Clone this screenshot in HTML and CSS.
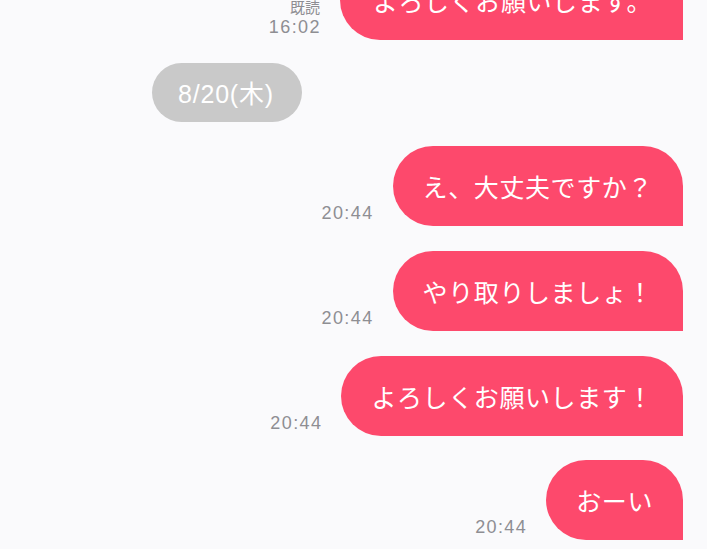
FILE: index.html
```html
<!DOCTYPE html>
<html lang="ja">
<head>
    <meta charset="UTF-8">
    <meta name="viewport" content="width=device-width, initial-scale=1.0">
    <title>トーク</title>
    <link rel="stylesheet" href="styles.css">
</head>
<body>
    <div class="chat">
        <div class="msg-row first">
            <div class="meta">
                <span class="read">既読</span>
                <span class="time">16:02</span>
            </div>
            <div class="bubble">よろしくお願いします。</div>
        </div>

        <div class="date-row">
            <span class="date-pill">8/20(木)</span>
        </div>

        <div class="msg-row">
            <div class="meta"><span class="time">20:44</span></div>
            <div class="bubble">え、大丈夫ですか？</div>
        </div>

        <div class="msg-row">
            <div class="meta"><span class="time">20:44</span></div>
            <div class="bubble">やり取りしましょ！</div>
        </div>

        <div class="msg-row">
            <div class="meta"><span class="time">20:44</span></div>
            <div class="bubble">よろしくお願いします！</div>
        </div>

        <div class="msg-row">
            <div class="meta"><span class="time">20:44</span></div>
            <div class="bubble">おーい</div>
        </div>
    </div>
</body>
</html>
```

FILE: styles.css
```css
:root {
    --bubble-color: #fd496c;
    --meta-color: #8e8e93;
}

body {
    margin: 0;
    padding: 0;
    background-color: #fafafc;
    font-family: "Noto Sans CJK JP", "Liberation Sans", sans-serif;
    overflow: hidden;
}

.chat {
    display: flex;
    flex-direction: column;
    gap: 24.7px;
    padding-right: 24px;
}

.msg-row {
    display: flex;
    justify-content: flex-end;
    align-items: flex-end;
    gap: 19px;
}

.msg-row.first {
    margin-top: -40px;
}

.msg-row.first .bubble {
    padding: 0 31px 0 33px;
}

.meta {
    display: flex;
    flex-direction: column;
    align-items: flex-end;
    padding-bottom: 2px;
    color: var(--meta-color);
}

.read {
    font-size: 15px;
    line-height: 16px;
    margin-bottom: 2px;
    margin-right: 1px;
}

.time {
    font-family: "Liberation Sans", sans-serif;
    font-size: 18px;
    line-height: 21px;
    letter-spacing: 1.4px;
}

.bubble {
    height: 80px;
    display: flex;
    align-items: center;
    padding: 0 30px;
    background-color: var(--bubble-color);
    color: white;
    font-size: 25px;
    letter-spacing: 0.6px;
    border-radius: 40px 40px 0 40px;
}

.date-row {
    display: flex;
    margin-top: -2px;
    padding-left: 152px;
}

.date-pill {
    display: inline-flex;
    align-items: center;
    height: 59px;
    padding: 0 28px 0 26px;
    border-radius: 30px;
    background-color: #c9c9c9;
    color: white;
    font-family: "Liberation Sans", "Noto Sans CJK JP", sans-serif;
    font-size: 25px;
    letter-spacing: 0.8px;
}
```
